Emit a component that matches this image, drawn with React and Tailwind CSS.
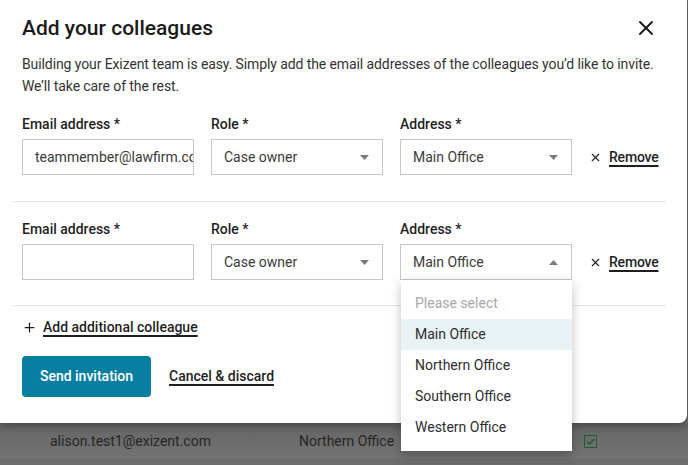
import { X, Plus } from "lucide-react";

const offices = ["Northern Office", "Southern Office", "Western Office"];

function Caret({ up }) {
  return (
    <svg width="9" height="5" viewBox="0 0 9 5" className="shrink-0">
      {up ? <path d="M0 5 L4.5 0 L9 5 Z" fill="#7a7a7a" /> : <path d="M0 0 L4.5 5 L9 0 Z" fill="#7a7a7a" />}
    </svg>
  );
}

function Field({ label, children }) {
  return (
    <div className="flex flex-col">
      <div className="text-[14px] leading-[20px] font-medium text-[#1f1f1f] mb-[5px]">{label}</div>
      {children}
    </div>
  );
}

function Select({ value, up }) {
  return (
    <div className="h-[36px] border border-[#c6c6c6] flex items-center justify-between pl-[12px] pr-[13px] text-[14px] text-[#3a3a3a] bg-white">
      <span>{value}</span>
      <Caret up={up} />
    </div>
  );
}

function RemoveLink() {
  return (
    <div className="flex items-center gap-[7px] h-[36px] mt-[25px] text-[14px] font-medium text-[#1f1f1f]">
      <X size={13} strokeWidth={2} />
      <span className="underline underline-offset-[3px] decoration-[1.5px] tracking-[-0.2px]">Remove</span>
    </div>
  );
}

function ColleagueRow({ email, open }) {
  return (
    <div className="grid grid-cols-[172px_172px_172px_auto] gap-x-[17px]">
      <Field label="Email address *">
        <div className="h-[36px] border border-[#c6c6c6] flex items-center pl-[12px] pr-[5px] overflow-hidden whitespace-nowrap text-[14px] text-[#3a3a3a]">
          {email}
        </div>
      </Field>
      <Field label="Role *">
        <Select value="Case owner" />
      </Field>
      <Field label="Address *">
        <div className="relative">
          <Select value="Main Office" up={open} />
          {open && (
            <div className="absolute left-[1px] right-0 top-[36px] z-20 bg-white pt-[7px] pb-[8px] shadow-[0_4px_10px_rgba(0,0,0,0.25)] text-[14px]">
              <div className="h-[32px] flex items-center px-[14px] text-[#a8a8a8]">Please select</div>
              <div className="h-[31px] flex items-center px-[14px] bg-[#e9f3f6] text-[#2e2e2e]">Main Office</div>
              {offices.map((o) => (
                <div key={o} className="h-[31px] flex items-center px-[14px] text-[#2e2e2e]">{o}</div>
              ))}
            </div>
          )}
        </div>
      </Field>
      <RemoveLink />
    </div>
  );
}

export default function App() {
  return (
    <div className="w-[688px] h-[465px] overflow-hidden bg-[#6c6c6c] font-['Roboto',sans-serif] relative">
      <div className="w-[687px] h-[423px] bg-white rounded-br-[8px] relative z-10 shadow-[0_2px_8px_rgba(0,0,0,0.35)]">
        <div className="flex items-start justify-between pl-[22px] pr-[29px] pt-[16px]">
          <h2 className="text-[21px] leading-[24px] font-medium text-[#1a1a1a]">Add your colleagues</h2>
          <X size={24} strokeWidth={2} className="text-[#1a1a1a]" />
        </div>
        <p className="pl-[22px] pr-[20px] mt-[13px] text-[14px] leading-[22px] tracking-[-0.1px] text-[#333]">
          Building your Exizent team is easy. Simply add the email addresses of the colleagues you’d like to invite.
          <br />
          We’ll take care of the rest.
        </p>
        <div className="pl-[22px] pt-[17px] pb-[26px]">
          <ColleagueRow email="teammember@lawfirm.com" />
        </div>
        <div className="ml-[13px] mr-[21px] border-t border-[#e6e6e6]" />
        <div className="pl-[22px] pt-[17px] pb-[25px]">
          <ColleagueRow email="" open />
        </div>
        <div className="ml-[13px] mr-[21px] border-t border-[#e6e6e6]" />
        <div className="pl-[22px] pt-[11px] flex items-center gap-[6px] text-[14px] leading-[20px] font-medium text-[#1f1f1f]">
          <Plus size={15} strokeWidth={2} />
          <span className="underline underline-offset-[3px] decoration-[1.5px]">Add additional colleague</span>
        </div>
        <div className="pl-[22px] mt-[19px] flex items-center gap-[18px]">
          <button className="h-[41px] w-[129px] rounded-[4px] bg-[#087ea1] text-white text-[14px] font-medium">Send invitation</button>
          <span className="text-[14px] font-medium text-[#1f1f1f] underline underline-offset-[3px] decoration-[1.5px]">Cancel &amp; discard</span>
        </div>
      </div>
      <div className="flex items-center h-[36px] text-[14px] text-[#262626] bg-gradient-to-b from-[#666] to-[#737373]">
        <span className="pl-[50px] w-[299px]">alison.test1@exizent.com</span>
        <span className="w-[285px]">Northern Office</span>
        <span className="w-[13px] h-[13px] border-[1.5px] border-[#1d5a36] flex items-center justify-center">
          <svg width="9" height="7" viewBox="0 0 9 7"><path d="M1 3.5 L3.5 6 L8 1" stroke="#1d5a36" strokeWidth="1.5" fill="none" /></svg>
        </span>
      </div>
    </div>
  );
}
